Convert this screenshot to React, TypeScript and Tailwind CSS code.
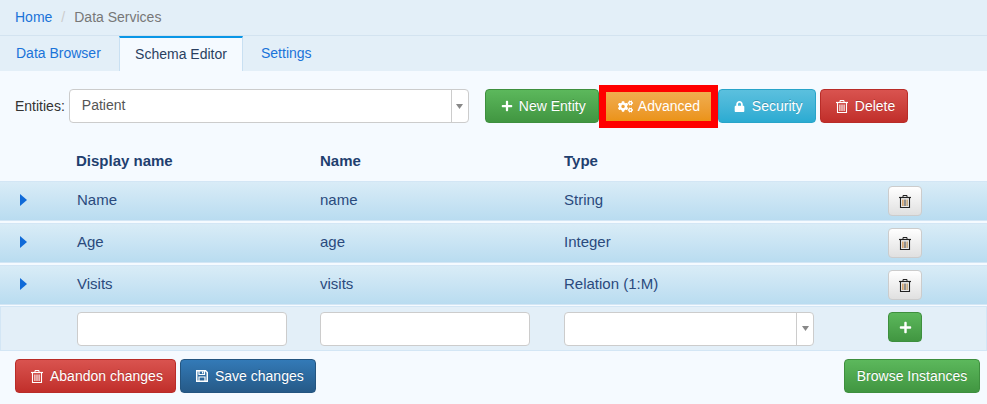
import React from "react";
import { FaCogs, FaLock, FaPlus } from "react-icons/fa";

const btn =
  "flex h-[34px] items-center rounded border text-[14px] text-white [text-shadow:0_-1px_0_rgba(0,0,0,0.2)]";
const green = "border-[#3e8f3e] bg-gradient-to-b from-[#5cb85c] to-[#419641]";
const red = "border-[#b92c28] bg-gradient-to-b from-[#d9534f] to-[#c12e2a]";

function Trash({ tinted = false }: { tinted?: boolean }) {
  return (
    <svg width="12" height="13" viewBox="0 0 12 13" fill="none" stroke="currentColor">
      <path d="M4 2 V0.5 H8 V2" strokeWidth="1" />
      <path d="M0 2.5 H12" strokeWidth="1.2" />
      <path d="M1.5 3 V12.5 H10.5 V3" strokeWidth="1.1" />
      <path d="M3.9 4.5 V11" strokeWidth="1.1" stroke={tinted ? "#c9802f" : "currentColor"} />
      <path d="M6 4.5 V11" strokeWidth="1.1" stroke={tinted ? "#444" : "currentColor"} />
      <path d="M8.1 4.5 V11" strokeWidth="1.1" stroke={tinted ? "#b98a4a" : "currentColor"} />
    </svg>
  );
}

function Floppy() {
  return (
    <svg width="12" height="12" viewBox="0 0 12 12" fill="none" stroke="currentColor">
      <path d="M0.75 0.75 H9.5 L11.25 2.5 V11.25 H0.75 Z" strokeWidth="1.5" />
      <path d="M3 1 V4.5 H8.5 V1" strokeWidth="1.2" />
      <path d="M6.6 1.4 V3.6" strokeWidth="1.2" />
      <path d="M3 11 V7 H9 V11" strokeWidth="1.2" />
    </svg>
  );
}

function Caret() {
  return (
    <svg width="7" height="12" viewBox="0 0 7 12" className="mb-[2px] ml-[20px]">
      <path d="M0 0 L7 6 L0 12 Z" fill="#0f6ad8" />
    </svg>
  );
}

function DropArrow() {
  return (
    <span className="flex h-full w-[17px] items-center justify-center border-l border-[#ccc]">
      <svg width="7" height="5" viewBox="0 0 7 5">
        <path d="M0 0 H7 L3.5 5 Z" fill="#888" />
      </svg>
    </span>
  );
}

function Row({ a, b, c }: { a: string; b: string; c: string }) {
  return (
    <div className="mb-[2px] grid h-[40px] grid-cols-[77px_243px_244px_324px_34px] items-center border-y border-[#d3e6f5] bg-gradient-to-b from-[#d9ecf7] to-[#b9dcf0] text-[15px] text-[#2a4a7d]">
      <Caret />
      <span className="mb-[2px]">{a}</span>
      <span className="mb-[2px]">{b}</span>
      <span className="mb-[2px]">{c}</span>
      <button className="flex h-[30px] w-[34px] items-center justify-center rounded border border-[#ccc] bg-gradient-to-b from-white to-[#e0e0e0] text-[#222]">
        <Trash tinted />
      </button>
    </div>
  );
}

export default function App() {
  return (
    <div className="h-[404px] w-[987px] overflow-hidden bg-[#f5faff] font-['Liberation_Sans',sans-serif] text-[14px] text-[#333]">
      <nav className="flex h-[36px] items-center border-b border-[#d3e3f0] bg-[#e3eff8] pl-[15px]">
        <a className="text-[#1a73d9]">Home</a>
        <span className="px-[9px] text-[#ccc]">/</span>
        <span className="text-[#777]">Data Services</span>
      </nav>
      <div className="flex h-[35px] bg-[#e3eff8]">
        <a className="flex w-[119px] items-center pl-[16px] text-[#1a73d9]">Data Browser</a>
        <a className="flex w-[124px] items-center justify-center border-x border-t-2 border-x-[#c9e0f2] border-t-[#0a96e6] bg-[#f5faff] text-[#2a3f5f]">
          Schema Editor
        </a>
        <a className="flex items-center pl-[18px] text-[#1a73d9]">Settings</a>
      </div>

      <div className="flex items-start pt-[14px] pl-[15px]">
        <span className="mt-[11px] mr-[4px]">Entities:</span>
        <div className="mt-[4px] flex h-[34px] w-[400px] items-center justify-between rounded border border-[#ccc] bg-white pl-[12px] text-[#555]">
          <span className="pb-[2px]">Patient</span>
          <DropArrow />
        </div>
        <button className={`${btn} ${green} mt-[4px] ml-[16px] w-[114px] gap-[6px] pl-[15px]`}>
          <FaPlus size={12} />
          New Entity
        </button>
        <div className="h-[43px] w-[119px] border-[7px] border-[#ff0000]">
          <button className="flex h-full w-full items-center gap-[5px] bg-gradient-to-b from-[#f0ad4e] to-[#eb9316] pl-[12px] text-white">
            <FaCogs size={15} />
            Advanced
          </button>
        </div>
        <button className={`${btn} mt-[4px] w-[98px] gap-[7px] border-[#28a4c9] bg-gradient-to-b from-[#5bc0de] to-[#2aabd2] pl-[15px]`}>
          <FaLock size={11} />
          Security
        </button>
        <button className={`${btn} ${red} mt-[4px] ml-[4px] w-[88px] gap-[7px] pl-[15px]`}>
          <Trash />
          Delete
        </button>
      </div>

      <div className="mt-[14px] grid h-[39px] grid-cols-[76px_244px_244px_1fr] items-center text-[15px] font-bold text-[#1f3f6f]">
        <span />
        <span>Display name</span>
        <span>Name</span>
        <span>Type</span>
      </div>

      <div>
        <Row a="Name" b="name" c="String" />
        <Row a="Age" b="age" c="Integer" />
        <Row a="Visits" b="visits" c="Relation (1:M)" />
      </div>

      <div className="-mt-[1px] grid h-[45px] grid-cols-[76px_243px_244px_324px_34px] items-center border border-[#d3e6f5] bg-[#e3eff8]">
        <span />
        <input className="h-[34px] w-[210px] rounded border border-[#ccc] bg-white" />
        <input className="h-[34px] w-[210px] rounded border border-[#ccc] bg-white" />
        <div className="flex h-[34px] w-[250px] items-center justify-end rounded border border-[#ccc] bg-white">
          <DropArrow />
        </div>
        <button className={`${green} mb-[3px] flex h-[30px] w-[34px] items-center justify-center rounded border text-white`}>
          <FaPlus size={13} />
        </button>
      </div>

      <div className="flex justify-between pt-[8px] pr-[7px] pl-[15px]">
        <div className="flex gap-[4px]">
          <button className={`${btn} ${red} w-[161px] gap-[7px] pl-[15px]`}>
            <Trash />
            Abandon changes
          </button>
          <button className={`${btn} w-[136px] gap-[7px] border-[#245580] bg-gradient-to-b from-[#337ab7] to-[#265a88] pl-[15px]`}>
            <Floppy />
            Save changes
          </button>
        </div>
        <button className={`${btn} ${green} w-[136px] justify-center`}>Browse Instances</button>
      </div>
    </div>
  );
}
